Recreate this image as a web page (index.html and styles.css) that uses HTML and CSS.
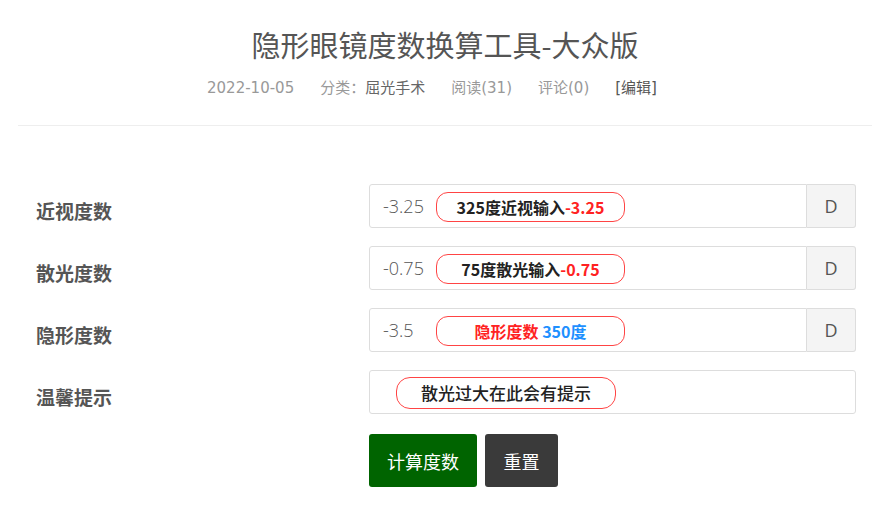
FILE: index.html
```html
<!DOCTYPE html>
<html lang="zh">
<head>
<meta charset="utf-8">
<title>隐形眼镜度数换算工具-大众版</title>
<link rel="stylesheet" href="styles.css">
</head>
<body>
<div class="page">
  <header class="head">
    <h1 class="title">隐形眼镜度数换算工具-大众版</h1>
    <div class="meta">
      <span>2022-10-05</span>
      <span>分类：<a class="cat">屈光手术</a></span>
      <span>阅读(31)</span>
      <span>评论(0)</span>
      <span class="edit">[编辑]</span>
    </div>
  </header>
  <form class="form">
    <div class="row">
      <label class="label">近视度数</label>
      <div class="group">
        <div class="box"><span class="val">-3.25</span><span class="pill"><span>325度近视输入<em class="red">-3.25</em></span></span></div>
        <span class="addon">D</span>
      </div>
    </div>
    <div class="row">
      <label class="label">散光度数</label>
      <div class="group">
        <div class="box"><span class="val">-0.75</span><span class="pill"><span>75度散光输入<em class="red">-0.75</em></span></span></div>
        <span class="addon">D</span>
      </div>
    </div>
    <div class="row">
      <label class="label">隐形度数</label>
      <div class="group">
        <div class="box"><span class="val">-3.5</span><span class="pill"><span><em class="red">隐形度数</em> <em class="blue">350度</em></span></span></div>
        <span class="addon">D</span>
      </div>
    </div>
    <div class="row">
      <label class="label">温馨提示</label>
      <div class="group">
        <div class="box tip"><span class="pill wide"><span>散光过大在此会有提示</span></span></div>
      </div>
    </div>
    <div class="actions">
      <button type="button" class="btn calc">计算度数</button>
      <button type="button" class="btn reset">重置</button>
    </div>
  </form>
</div>
</body>
</html>
```
FILE: styles.css
```css
html, body {
  margin: 0;
  padding: 0;
  background: #fff;
}
body {
  font-family: "Noto Sans CJK SC", "Noto Sans", "Liberation Sans", sans-serif;
  color: #555;
}
.page {
  padding: 0 21px 0 18px;
}
.head {
  border-bottom: 1px solid #eee;
  padding-top: 23px;
  padding-bottom: 27px;
  text-align: center;
}
.title {
  margin: 0;
  font-size: 29px;
  font-weight: normal;
  line-height: 42px;
  color: #555;
}
.meta {
  margin-top: 13px;
  font-family: "DejaVu Sans", "Noto Sans CJK SC", sans-serif;
  font-size: 15px;
  line-height: 20px;
  color: #999;
  display: flex;
  justify-content: center;
  gap: 26px;
  padding-right: 26px;
}
.cat { color: #666; }
.edit { color: #555; }
.form {
  padding-top: 58px;
  padding-left: 18px;
}
.row {
  display: flex;
  align-items: center;
  height: 44px;
  margin-bottom: 18px;
}
.label {
  width: 333px;
  flex: none;
  font-size: 19px;
  font-weight: bold;
  color: #555;
  padding-top: 8px;
}
.group {
  display: flex;
  width: 487px;
  height: 44px;
  box-sizing: border-box;
}
.box {
  flex: 1;
  display: flex;
  align-items: center;
  border: 1px solid #ddd;
  border-radius: 3px 0 0 3px;
  padding-left: 13px;
}
.box.tip {
  border-radius: 3px;
  padding-left: 26px;
}
.val {
  width: 53px;
  flex: none;
  font-size: 18px;
  color: #555;
  font-family: "Open Sans", "Noto Sans", sans-serif;
  font-weight: 300;
  margin-top: -1px;
}
.pill {
  width: 189px;
  height: 30px;
  box-sizing: border-box;
  border: 1px solid #f44;
  border-radius: 12px;
  display: flex;
  align-items: center;
  justify-content: center;
  font-size: 16px;
  font-weight: bold;
  color: #222;
  white-space: pre;
  margin-top: 1px;
}
.pill.wide {
  width: 220px;
  height: 32px;
  font-size: 17px;
  border-radius: 14px;
  font-weight: 500;
}
.pill em {
  font-style: normal;
}
.red { color: #f22; }
.blue { color: #1e90ff; }
.addon {
  width: 49px;
  flex: none;
  box-sizing: border-box;
  display: flex;
  align-items: center;
  justify-content: center;
  background: #f4f4f4;
  border: 1px solid #ddd;
  border-left: none;
  border-radius: 0 3px 3px 0;
  font-size: 18px;
  color: #555;
  font-family: "Open Sans", "Noto Sans", sans-serif;
}
.actions {
  display: flex;
  gap: 8px;
  padding-left: 333px;
  margin-top: 20px;
}
.btn {
  border: none;
  border-radius: 3px;
  color: #fff;
  font-size: 18px;
  font-family: "Noto Sans CJK SC", sans-serif;
  height: 53px;
  padding: 0;
  cursor: pointer;
}
.calc {
  width: 108px;
  background: #006400;
}
.reset {
  width: 73px;
  background: #3a3a3a;
}
```
